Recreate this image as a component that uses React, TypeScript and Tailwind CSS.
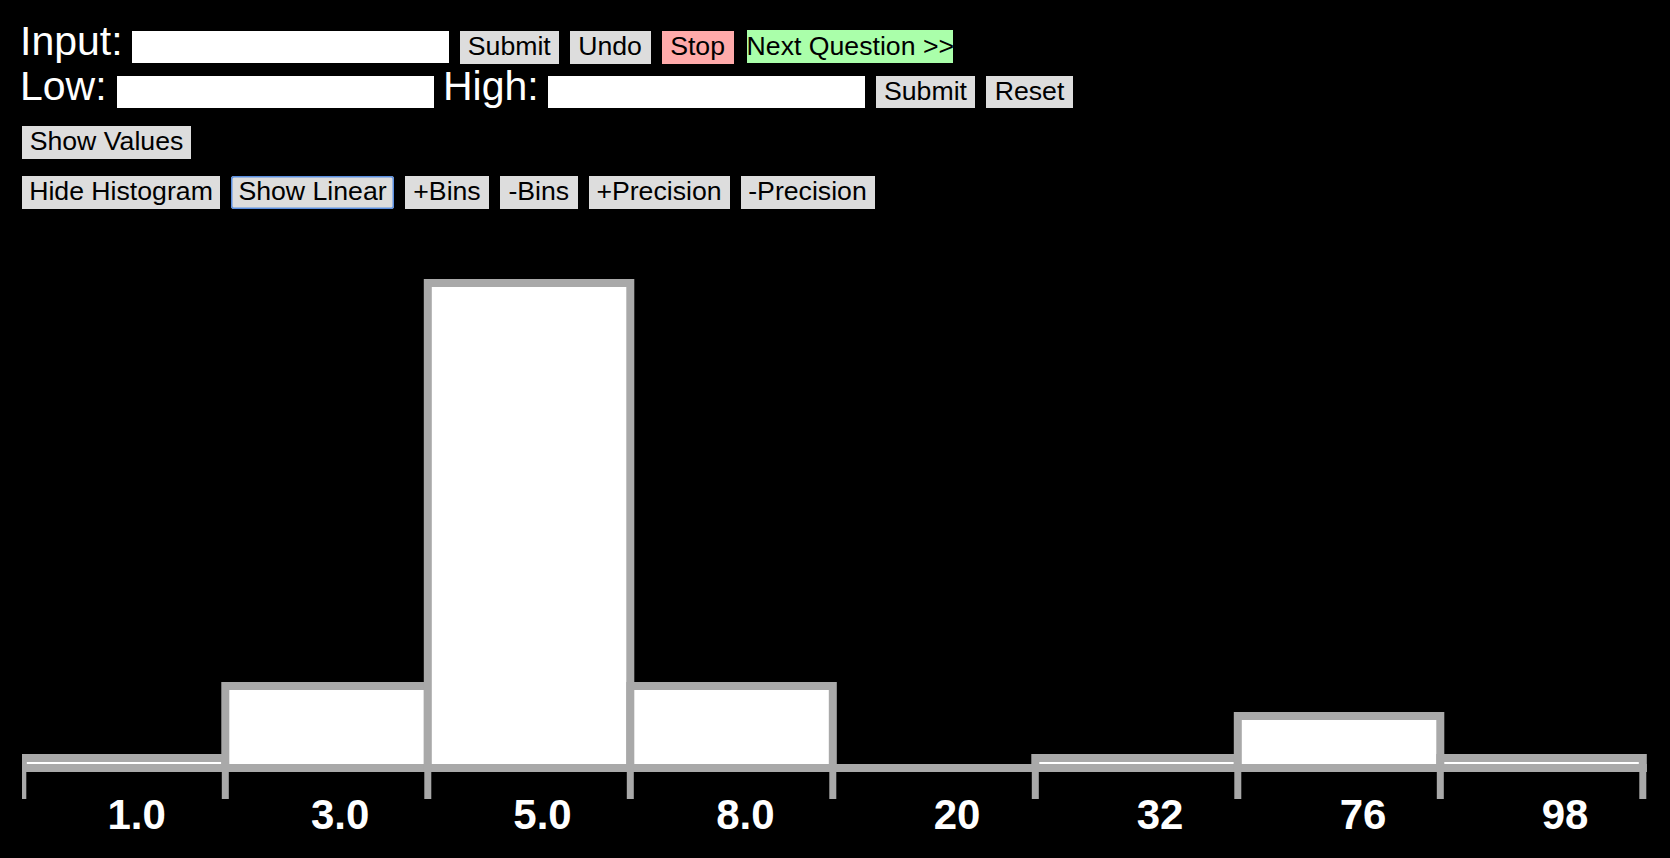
import React from 'react';

type Btn = { label: string; cls: string };

// histogram geometry, in page pixels
const ticks = Array.from({ length: 9 }, (_, i) => 22.8 + i * 202.5);
const tops: (number | null)[] = [759, 687, 284, 687, null, 759, 717, 759];
const labels: [string, number][] = [
  ['1.0', 136.6],
  ['3.0', 340.2],
  ['5.0', 542.5],
  ['8.0', 745.4],
  ['20', 957],
  ['32', 1160],
  ['76', 1363],
  ['98', 1565],
];
const AXIS_Y = 769;
const GRAY = '#a9a9a9';

const btnBase =
  'h-[32.7px] shrink-0 pt-0 pb-[2.7px] text-center text-[26.67px] leading-[30px] text-black';

const row4: Btn[] = [
  { label: 'Hide Histogram', cls: 'w-[198px] bg-[#dddddd]' },
  { label: 'Show Linear', cls: 'w-[163px] bg-[#dddddd] rounded-[3px] ring-[1.5px] ring-inset ring-[#5b8fe0]' },
  { label: '+Bins', cls: 'w-[84px] bg-[#dddddd]' },
  { label: '-Bins', cls: 'w-[77.5px] bg-[#dddddd]' },
  { label: '+Precision', cls: 'w-[141px] bg-[#dddddd]' },
  { label: '-Precision', cls: 'w-[134px] bg-[#dddddd]' },
];

function Histogram() {
  return (
    <svg
      className="block"
      width={1648}
      height={648}
      viewBox="22 210 1648 648"
    >
      <line x1={22} y1={AXIS_Y} x2={ticks[8] + 4} y2={AXIS_Y} stroke={GRAY} strokeWidth={8} />
      {tops.map((top, i) =>
        top === null ? null : (
          <rect
            key={i}
            x={ticks[i]}
            y={top}
            width={ticks[i + 1] - ticks[i]}
            height={AXIS_Y - top}
            fill="#ffffff"
            stroke={GRAY}
            strokeWidth={8}
          />
        )
      )}
      {ticks.map((x, i) => (
        <line key={i} x1={x} y1={AXIS_Y} x2={x} y2={800} stroke={GRAY} strokeWidth={7} />
      ))}
      {labels.map(([t, x]) => (
        <text
          key={t}
          x={x}
          y={830}
          textAnchor="middle"
          fill="#ffffff"
          fontFamily="'Liberation Sans', Arial, sans-serif"
          fontWeight="bold"
          fontSize={42}
        >
          {t}
        </text>
      ))}
    </svg>
  );
}

export default function App() {
  return (
    <div className="h-[858px] w-full overflow-hidden bg-black font-['Liberation_Sans',Arial,sans-serif]">
      <div className="pl-[22px] pt-[30px]">
        {/* Input row */}
        <div className="flex items-baseline">
          <span className="-ml-[2px] mr-[8px] w-[104px] shrink-0 text-[41px] leading-[20px] text-white">Input:</span>
          <input className="h-[32.7px] w-[317px] shrink-0 self-center bg-white outline-none" />
          <button className={`${btnBase} ml-[11px] w-[98.6px] bg-[#dddddd]`}>Submit</button>
          <button className={`${btnBase} ml-[11px] w-[81px] bg-[#dddddd]`}>Undo</button>
          <button className={`${btnBase} ml-[11px] w-[72px] bg-[#ffaaaa]`}>Stop</button>
          <button className="ml-[13px] h-[33.3px] w-[206px] shrink-0 overflow-hidden whitespace-nowrap bg-[#aaffaa] pt-[1px] pb-[2.3px] text-left text-[26.67px] leading-[30px] text-black">
            Next Question &gt;&gt;
          </button>
        </div>

        {/* Low / High row */}
        <div className="mt-[12px] flex items-baseline">
          <span className="-ml-[2px] mr-[8px] w-[89px] shrink-0 text-[41px] leading-[20px] text-white">Low:</span>
          <input className="h-[32.7px] w-[317px] shrink-0 self-center bg-white outline-none" />
          <span className="ml-[9px] mr-[8px] w-[97px] shrink-0 text-[41px] leading-[20px] text-white">High:</span>
          <input className="h-[32.7px] w-[317px] shrink-0 self-center bg-white outline-none" />
          <button className={`${btnBase} ml-[11px] w-[99px] bg-[#dddddd]`}>Submit</button>
          <button className={`${btnBase} ml-[11px] w-[87px] bg-[#dddddd]`}>Reset</button>
        </div>

        <div className="mt-[18px] flex">
          <button className={`${btnBase} w-[169px] bg-[#dddddd]`}>Show Values</button>
        </div>

        <div className="mt-[17px] flex gap-[11px]">
          {row4.map((b) => (
            <button key={b.label} className={`${btnBase} ${b.cls}`}>
              {b.label}
            </button>
          ))}
        </div>
      </div>

      <div className="pl-[22px]">
        <Histogram />
      </div>
    </div>
  );
}
